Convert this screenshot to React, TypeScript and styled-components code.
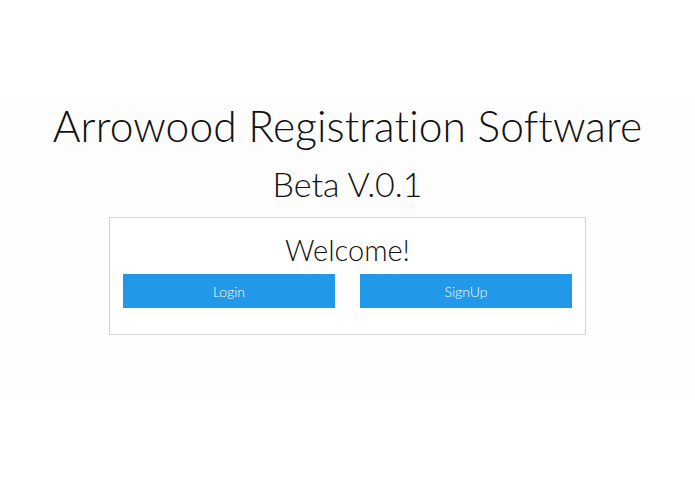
import styled, { createGlobalStyle } from 'styled-components';

const GlobalStyle = createGlobalStyle`
    html, body {
        margin: 0;
        padding: 0;
        background: #ffffff;
    }
    body {
        font-family: Lato, 'Open Sans', sans-serif;
        color: #111;
    }
`;

const Page = styled.div`
    width: 100%;
    height: 494px;
    padding-top: 102px;
    box-sizing: border-box;
`;

const Band = styled.main`
    height: 291px;
    background-color: #fdfdfd;
    display: flex;
    flex-direction: column;
    align-items: center;
`;

const Title = styled.h1`
    margin: 0;
    font-size: 42.5px;
    font-weight: 300;
    line-height: 48px;
    letter-spacing: 0.1px;
`;

const Version = styled.h2`
    margin: 13px 0 0;
    font-size: 34px;
    font-weight: 300;
    line-height: 42px;
`;

const Card = styled.section`
    margin-top: 12px;
    width: 477px;
    height: 118px;
    box-sizing: border-box;
    border: 1px solid #d4d4d4;
    background: #fff;
    padding: 0 13px;
    display: flex;
    flex-direction: column;
    align-items: center;
`;

const Welcome = styled.h3`
    margin: 14px 0 0;
    font-size: 29px;
    font-weight: 300;
    line-height: 36px;
`;

const ButtonRow = styled.div`
    margin-top: 6px;
    width: 100%;
    display: flex;
    justify-content: space-between;
`;

const ActionButton = styled.button`
    width: 212px;
    height: 34px;
    border: none;
    background-color: #2299e8;
    color: #fff;
    font-family: Lato, 'Open Sans', sans-serif;
    font-size: 14px;
    font-weight: 300;
    cursor: pointer;
`;

export default function App() {
    return (
        <>
            <GlobalStyle />
            <Page>
                <Band>
                    <Title>Arrowood Registration Software</Title>
                    <Version>Beta V.0.1</Version>
                    <Card>
                        <Welcome>Welcome!</Welcome>
                        <ButtonRow>
                            <ActionButton>Login</ActionButton>
                            <ActionButton>SignUp</ActionButton>
                        </ButtonRow>
                    </Card>
                </Band>
            </Page>
        </>
    );
}
